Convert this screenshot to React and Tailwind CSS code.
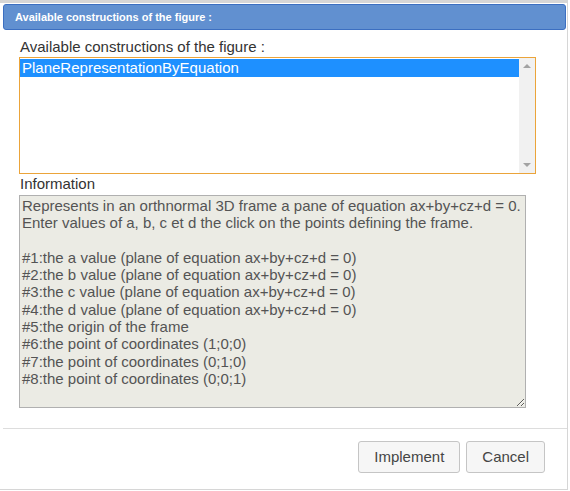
import React from "react";

const info = `Represents in an orthnormal 3D frame a pane of equation ax+by+cz+d = 0.
Enter values of a, b, c et d the click on the points defining the frame.

#1:the a value (plane of equation ax+by+cz+d = 0)
#2:the b value (plane of equation ax+by+cz+d = 0)
#3:the c value (plane of equation ax+by+cz+d = 0)
#4:the d value (plane of equation ax+by+cz+d = 0)
#5:the origin of the frame
#6:the point of coordinates (1;0;0)
#7:the point of coordinates (0;1;0)
#8:the point of coordinates (0;0;1)`;

export default function App() {
  return (
    <div
      className="w-[570px] h-[491px] bg-white overflow-hidden"
      style={{ fontFamily: '"Liberation Sans", Arial, sans-serif' }}
    >
      <div className="w-[568px] h-[490px] border-t-[3px] border-r border-b border-[#d6d6d6] flex flex-col">
        {/* Title bar */}
        <div className="mt-[1px] ml-[3px] mr-[1px] h-[26px] bg-[#6190d0] border border-[#3c6fc1] rounded-[3px] flex items-center pl-[11px]">
          <span className="text-white text-[11px] font-bold">
            Available constructions of the figure :
          </span>
        </div>

        {/* Content */}
        <div className="pl-[19px] pt-[8px] flex flex-col">
          <label className="text-[15px] leading-[17px] text-[#333] pl-[1px]">
            Available constructions of the figure :
          </label>
          {/* focused listbox */}
          <div className="mt-[2px] w-[517px] h-[117px] border border-[#eba43a] bg-white flex">
            <div className="flex-1 pt-[1px]">
              <div className="h-[18px] bg-[#1e90ff] text-white text-[15px] leading-[17px] pl-[2px]">
                PlaneRepresentationByEquation
              </div>
            </div>
            <div className="w-[16px] bg-[#f1f1f1] flex flex-col items-center justify-between py-[6px]">
              <div className="w-0 h-0 border-l-[4px] border-r-[4px] border-b-[4px] border-l-transparent border-r-transparent border-b-[#a3a3a3]" />
              <div className="w-0 h-0 border-l-[4px] border-r-[4px] border-t-[4px] border-l-transparent border-r-transparent border-t-[#a3a3a3]" />
            </div>
          </div>

          <label className="mt-[1px] text-[15px] leading-[18px] text-[#333] pl-[1px]">
            Information
          </label>
          <textarea
            readOnly
            value={info}
            className="mt-[2px] w-[507px] h-[213px] bg-[#ebebe4] border border-[#b0b0b0] text-[15px] leading-[17.3px] text-[#545454] px-[2px] pt-[1px] pb-[2px] outline-none"
            style={{ fontFamily: '"Liberation Sans", Arial, sans-serif' }}
          />
        </div>

        {/* Button pane */}
        <div className="mt-[20px] ml-[3px] border-t border-[#dddddd] flex justify-end gap-[6px] pt-[12px] pr-[22px]">
          <button className="h-[32px] px-[15px] bg-[#f6f6f6] border border-[#c5c5c5] rounded-[3px] text-[15px] text-[#454545]">
            Implement
          </button>
          <button className="h-[32px] px-[15px] bg-[#f6f6f6] border border-[#c5c5c5] rounded-[3px] text-[15px] text-[#454545]">
            Cancel
          </button>
        </div>
      </div>
    </div>
  );
}
